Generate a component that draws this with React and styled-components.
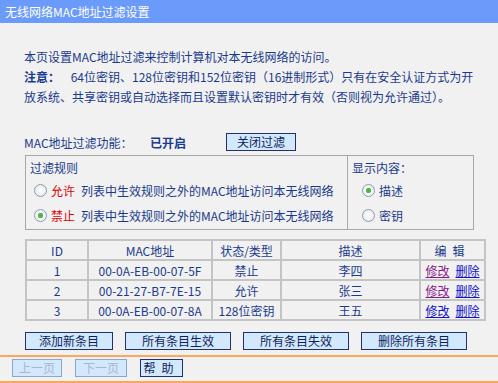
import React from 'react';
import styled, { createGlobalStyle } from 'styled-components';

const GlobalStyle = createGlobalStyle`
html, body {
  margin: 0;
  padding: 0;
  background: #f1f1f1;
}
body {
  font-family: "Noto Sans CJK SC", "Liberation Sans", sans-serif;
  font-size: 12px;
  color: #1a3a8f;
}
`

const Page = styled.div`
width: 498px;
height: 383px;
overflow: hidden;
display: flex;
flex-direction: column;
background: #f1f1f1;
`

const Header = styled.div`
height: 23px;
line-height: 23px;
background: #6a9bfb;
color: #fff;
padding-left: 5px;
font-size: 12px;
`

const Content = styled.div`
padding: 0 24px 0 24px;
`

const Intro = styled.div`
margin-top: 24px;
line-height: 20px;
`

const Strong = styled.b`
font-weight: bold;
margin-right: 8px;
`

const StatusRow = styled.div`
margin-top: 25px;
height: 20px;
display: flex;
align-items: center;
`

const StatusLabel = styled.span`
width: 126px;
`

const StatusValue = styled.b`
width: 76px;
font-weight: bold;
`

const Button = styled.button`
height: 18px;
width: ${props => props.w || 70}px;
padding: 0;
border: 1px solid ${props => (props.disabled ? '#8ea4cc' : '#22306e')};
background: #d2e8fd;
color: ${props => (props.disabled ? '#a7b6cc' : '#0d1f5c')};
font-family: "Noto Sans CJK SC", "Liberation Sans", sans-serif;
font-size: 12px;
line-height: 16px;
letter-spacing: ${props => props.spaced ? '6px' : '0'};
`

const RuleBox = styled.div`
margin: 3px 0 0 1px;
display: grid;
grid-template-columns: 321px 128px;
border: 1px solid #a8a8a8;
width: 449px;
box-sizing: border-box;
`

const RuleCell = styled.div`
padding: 2px 0 1px ${props => props.pad}px;
border-left: ${props => (props.divider ? '1px solid #a8a8a8' : 'none')};
`

const CellTitle = styled.div`
height: 20px;
line-height: 20px;
`

const OptionRow = styled.div`
height: ${props => props.h}px;
display: flex;
align-items: center;
padding-left: ${props => props.indent}px;
`

const Radio = styled.span`
width: 11px;
height: 11px;
border-radius: 50%;
border: 1px solid #8a9bb2;
background: radial-gradient(circle at 50% 50%, ${props => (props.checked ? '#3fae3f 0, #55c24f 2.5px, #fff 3px' : '#fff 0')}, #e4e4e4 100%);
margin-right: 4px;
flex-shrink: 0;
`

const Red = styled.span`
color: #e20000;
margin-right: 6px;
`

const Table = styled.table`
margin: 9px 0 0 1px;
width: 449px;
border-collapse: collapse;
border: 2px solid #c4c4c4;
table-layout: fixed;
`

const Th = styled.th`
width: ${props => props.w}px;
font-weight: normal;
height: 18px;
padding: 0;
border: 2px solid #c4c4c4;
text-align: center;
letter-spacing: ${props => props.spaced ? '6px' : '0'};
`

const Td = styled.td`
height: 18px;
padding: 0;
border: 2px solid #c4c4c4;
text-align: center;
white-space: nowrap;
`

const EditLink = styled.a`
color: ${props => (props.visited ? '#8a1a8a' : '#1010d0')};
text-decoration: underline;
margin: 0 3px;
cursor: pointer;
`

const ActionBar = styled.div`
margin: 11px 0 0 1px;
display: flex;
gap: 12px;
`

const Footer = styled.div`
margin-top: 5px;
border-top: 2px solid #fba85a;
border-bottom: 2px solid #fba85a;
height: 22px;
padding: 2px 0 0 12px;
display: flex;
gap: 13px;
align-items: flex-start;
`

const rows = [
  { id: 1, mac: '00-0A-EB-00-07-5F', status: '禁止', desc: '李四', visited: true },
  { id: 2, mac: '00-21-27-B7-7E-15', status: '允许', desc: '张三', visited: true },
  { id: 3, mac: '00-0A-EB-00-07-8A', status: '128位密钥', desc: '王五', visited: false },
];

export default function App() {
  return (
    <Page>
      <GlobalStyle />
      <Header>无线网络MAC地址过滤设置</Header>
      <Content>
        <Intro>
          本页设置MAC地址过滤来控制计算机对本无线网络的访问。<br />
          <Strong>注意：</Strong> 64位密钥、128位密钥和152位密钥（16进制形式）只有在安全认证方式为开<br />
          放系统、共享密钥或自动选择而且设置默认密钥时才有效（否则视为允许通过）。
        </Intro>
        <StatusRow>
          <StatusLabel>MAC地址过滤功能：</StatusLabel>
          <StatusValue>已开启</StatusValue>
          <Button w={70}>关闭过滤</Button>
        </StatusRow>
        <RuleBox>
          <RuleCell pad={4}>
            <CellTitle>过滤规则</CellTitle>
            <OptionRow h={25} indent={4}>
              <Radio /><Red>允许</Red>列表中生效规则之外的MAC地址访问本无线网络
            </OptionRow>
            <OptionRow h={25} indent={4}>
              <Radio checked /><Red>禁止</Red>列表中生效规则之外的MAC地址访问本无线网络
            </OptionRow>
          </RuleCell>
          <RuleCell pad={4} divider>
            <CellTitle>显示内容：</CellTitle>
            <OptionRow h={25} indent={10}>
              <Radio checked />描述
            </OptionRow>
            <OptionRow h={24} indent={10}>
              <Radio />密钥
            </OptionRow>
          </RuleCell>
        </RuleBox>
        <Table>
          <thead>
            <tr>
              <Th w={60}>ID</Th>
              <Th w={122}>MAC地址</Th>
              <Th w={67}>状态/类型</Th>
              <Th w={137}>描述</Th>
              <Th w={63} spaced>编辑</Th>
            </tr>
          </thead>
          <tbody>
            {rows.map(r => (
              <tr key={r.id}>
                <Td>{r.id}</Td>
                <Td>{r.mac}</Td>
                <Td>{r.status}</Td>
                <Td>{r.desc}</Td>
                <Td>
                  <EditLink visited={r.visited}>修改</EditLink>
                  <EditLink>删除</EditLink>
                </Td>
              </tr>
            ))}
          </tbody>
        </Table>
        <ActionBar>
          <Button w={88}>添加新条目</Button>
          <Button w={106}>所有条目生效</Button>
          <Button w={106}>所有条目失效</Button>
          <Button w={106}>删除所有条目</Button>
        </ActionBar>
      </Content>
      <Footer>
        <Button w={50} disabled>上一页</Button>
        <Button w={52} disabled>下一页</Button>
        <Button w={43} spaced>帮助</Button>
      </Footer>
    </Page>
  );
}
